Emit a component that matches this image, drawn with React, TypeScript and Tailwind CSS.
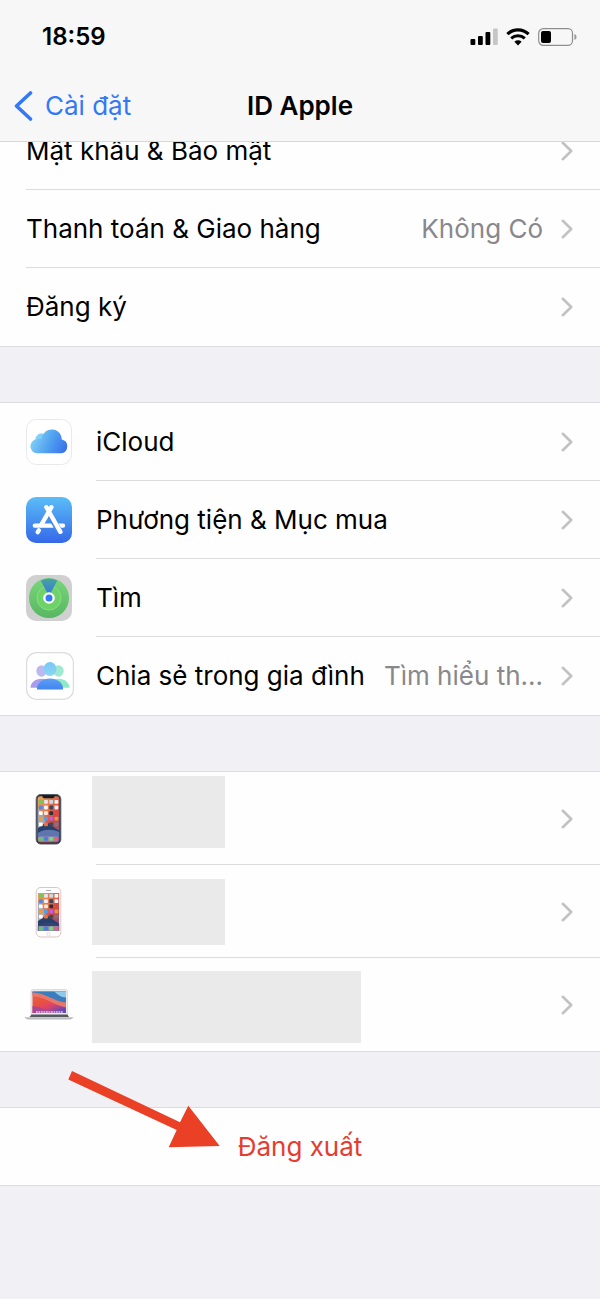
import React from "react";
import clsx from "clsx";

const Chevron = () => (
  <svg width="12" height="20" viewBox="0 0 12 20" fill="none" className="shrink-0" aria-hidden="true">
    <path d="M1.8 1.8 10.2 10l-8.4 8.2" stroke="#c2c2c5" strokeWidth="2.6" strokeLinecap="round" strokeLinejoin="round" />
  </svg>
);

const SignalIcon = () => (
  <svg width="28" height="18" viewBox="0 0 28 18" aria-hidden="true">
    <rect x="0.5" y="11" width="4.8" height="6" rx="1" />
    <rect x="8" y="8" width="4.8" height="9" rx="1" />
    <rect x="15.5" y="4" width="4.8" height="13" rx="1" />
    <rect x="23" y="0.5" width="4.8" height="16.5" rx="1" fill="#c6c6c6" />
  </svg>
);

const WifiIcon = () => (
  <svg width="24" height="18" viewBox="0 0 24 18" fill="none" aria-hidden="true">
    <path d="M1.4 6.2a15.4 15.4 0 0 1 21.2 0" stroke="#000" strokeWidth="3.2" />
    <path d="M5.2 10.3a10 10 0 0 1 13.6 0" stroke="#000" strokeWidth="3" />
    <path d="M12 17.4 8.4 13.8a5.2 5.2 0 0 1 7.2 0Z" fill="#000" />
  </svg>
);

const BatteryIcon = () => (
  <svg width="40" height="18" viewBox="0 0 40 18" fill="none" aria-hidden="true">
    <rect x="0.7" y="0.7" width="33.8" height="16.6" rx="4.6" stroke="#8e8e8e" strokeWidth="1.2" />
    <rect x="3" y="3" width="10" height="12" rx="2" fill="#000" />
    <path d="M36.4 6v6c1.4-.6 2.1-1.7 2.1-3s-.7-2.4-2.1-3Z" fill="#999" />
  </svg>
);

const CloudIcon = () => (
  <svg width="46" height="46" viewBox="0 0 46 46" aria-hidden="true">
    <defs>
      <linearGradient id="cloud" x1="0" y1="0.4" x2="1" y2="0.7">
        <stop offset="0" stopColor="#84d3f7" />
        <stop offset="0.55" stopColor="#4f9ff0" />
        <stop offset="1" stopColor="#3a72ea" />
      </linearGradient>
    </defs>
    <rect x="0.5" y="0.5" width="45" height="45" rx="10" fill="#fff" stroke="#e9e9eb" />
    <path
      d="M11 34.3a7 7 0 0 1-1.6-13.7A6 6 0 0 1 17.4 15 10 10 0 0 1 35.8 20.6a7 7 0 0 1-.2 13.7Z"
      fill="url(#cloud)"
    />
    <path d="M9.4 20.6a6 6 0 0 1 8-5.6c-1.6 1.8-2 3.4-1.600 5.6-2-1-4.300-1-6.400 0Z" fill="#8dd8f6" opacity="0.6" />
  </svg>
);

const AppStoreIcon = () => (
  <svg width="46" height="46" viewBox="0 0 46 46" fill="none" aria-hidden="true">
    <defs>
      <linearGradient id="store" x1="0" y1="0" x2="0" y2="1">
        <stop offset="0" stopColor="#5abdf7" />
        <stop offset="1" stopColor="#3568e8" />
      </linearGradient>
    </defs>
    <rect width="46" height="46" rx="10" fill="url(#store)" />
    <path d="M8.8 28.6h18M33 28.6h4M12.8 33.4l-1.1 1.8" stroke="#fff" strokeWidth="4.4" strokeLinecap="round" />
    <path d="m22.5 15.500 11 19" stroke="#4685ee" strokeWidth="6.4" />
    <path d="M25.4 10.2 15.2 28M20.4 10.2l14 24.600" stroke="#fff" strokeWidth="4.4" strokeLinecap="round" />
  </svg>
);

const FindIcon = () => (
  <svg width="46" height="46" viewBox="0 0 46 46" fill="none" aria-hidden="true">
    <defs>
      <linearGradient id="find" x1="0" y1="0" x2="0" y2="1">
        <stop offset="0" stopColor="#78d77a" />
        <stop offset="1" stopColor="#59b662" />
      </linearGradient>
      <linearGradient id="beam" x1="0" y1="0" x2="0" y2="1">
        <stop offset="0" stopColor="#4aa39d" />
        <stop offset="1" stopColor="#3273e8" />
      </linearGradient>
    </defs>
    <rect width="46" height="46" rx="10" fill="#d0d0d0" />
    <circle cx="23" cy="23" r="20" fill="url(#find)" />
    <circle cx="23" cy="23" r="12" fill="#6dd267" stroke="#8ade80" />
    <path d="M23 21 14.8 5.8c5-3 11.4-3 16.4 0Z" fill="url(#beam)" />
    <circle cx="23" cy="23" r="5.8" fill="#fff" />
    <circle cx="23" cy="23" r="3.5" fill="#3478f6" />
  </svg>
);

const FamilyIcon = () => (
  <svg width="48" height="48" viewBox="0 0 48 48" aria-hidden="true">
    <defs>
      <linearGradient id="head" x1="0" y1="0" x2="0" y2="1">
        <stop offset="0" stopColor="#79c7f6" />
        <stop offset="1" stopColor="#8ad6f3" />
      </linearGradient>
      <linearGradient id="body" x1="0" y1="0" x2="0" y2="1">
        <stop offset="0" stopColor="#5a9ff4" />
        <stop offset="1" stopColor="#4485f0" />
      </linearGradient>
    </defs>
    <rect x="0.6" y="0.6" width="46.8" height="46.8" rx="10" fill="#fff" stroke="#dcdcde" strokeWidth="1.2" />
    <ellipse cx="15.5" cy="19" rx="5.2" ry="5.7" fill="#bcb9f1" />
    <ellipse cx="32.5" cy="19" rx="5.2" ry="5.7" fill="#9ee9cf" />
    <path d="M4.5 35.8c0-5 4.5-9 11-9 4 0 7 1.500 9 4v5Z" fill="#a79dec" />
    <path d="M43.5 35.8c0-5-4.5-9-11-9-4 0-7 1.500-9 4v5Z" fill="#91e8c8" />
    <ellipse cx="24" cy="17" rx="6.4" ry="7" fill="url(#head)" />
    <path d="M11 37.4c-.6-6 5-11 13-11s13.6 5 13 11Z" fill="url(#body)" />
  </svg>
);

const appColors = [
  ["#5ed15f", "#e9e4f0", "#c8d9ec", "#fdf6ef"],
  ["#4b8bed", "#f4f4f4", "#3d4654", "#f3f4fb"],
  ["#fff", "#fbeade", "#28303a", "#e6463a"],
  ["#f59b36", "#4a9ff0", "#c55ae8", "#f19138"],
  ["#fff", "#f0713e", "#43484f", "#8c736b"],
];

type PhoneProps = { classic?: boolean };

const PhoneIcon = ({ classic }: PhoneProps) => {
  const id = classic ? "classicScreen" : "modernScreen";
  const left = classic ? 2.4 : 2;
  const gap = 5.2;

  return (
    <svg width="48" height="52" viewBox="0 0 48 52" aria-hidden="true">
      <defs>
        <linearGradient id={id} x1="0" y1="0" x2="0.9" y2="1">
          <stop offset="0" stopColor="#efa458" />
          <stop offset="0.35" stopColor="#e27c50" />
          <stop offset="0.6" stopColor="#d44b41" />
          <stop offset="1" stopColor="#74548f" />
        </linearGradient>
      </defs>
      <g transform="translate(11.5 1)">
        <rect
          x="0.7"
          y="0.5"
          width="24.6"
          height="49.5"
          rx="4.5"
          fill={classic ? "#fff" : "#23272d"}
          stroke={classic ? "#dfc3c2" : "#555e68"}
          strokeWidth="1"
        />
        <rect
          x={left}
          y={classic ? 6 : 2.2}
          width={classic ? 21.2 : 22}
          height={classic ? 38 : 46.2}
          rx={classic ? 0 : 3}
          fill={`url(#${id})`}
        />
        <path d="M2.4 14c4 4 7 10 8 16l-8 6Z" fill="#a3a9b4" />
        <path d="M2.4 34c3-1 6-5 9-5.5C15 30 19 34 23.6 36.5V44H2.4Z" fill="#27406d" />
        <path d="M2.4 39c6-4 14-4 21.2-1v6H2.4Z" fill={classic ? "#36446f" : "#6075ad"} />
        {!classic && <path d="M7 1.5h12v1c0 1-.8 1.7-1.8 1.7H8.8C7.8 4.2 7 3.5 7 2.5Z" fill="#16191d" />}
        {appColors.map((row, r) =>
          row.map((color, c) => (
            <rect
              key={`${r}-${c}`}
              x={3.4 + c * gap}
              y={(classic ? 7 : 6) + r * (classic ? 5.2 : 5.6)}
              width="3.8"
              height="3.8"
              rx="0.8"
              fill={color}
            />
          ))
        )}
        <rect x={left + 0.6} y={classic ? 39 : 42.5} width="20.2" height="5" rx={classic ? 0 : 1.5} fill="#a996c2" opacity="0.8" />
        {["#56cf62", "#4381df", "#78dc74", "#ee5c78"].map((color, c) => (
          <rect key={color} x={3.4 + c * gap} y={classic ? 39.6 : 43} width="3.8" height="3.8" rx="0.8" fill={color} />
        ))}
        {classic && (
          <>
            <path d="M10.5 3.5h5" stroke="#999" strokeWidth="0.8" />
            <circle cx="13" cy="47" r="1.7" fill="#fff" stroke="#d9c4c2" strokeWidth="0.6" />
          </>
        )}
      </g>
    </svg>
  );
};

const LaptopIcon = () => (
  <svg width="50" height="32" viewBox="0 0 50 32" aria-hidden="true">
    <defs>
      <linearGradient id="laptop" x1="0" y1="0" x2="0.7" y2="1">
        <stop offset="0" stopColor="#e8615a" />
        <stop offset="0.45" stopColor="#e9523c" />
        <stop offset="0.7" stopColor="#df426a" />
        <stop offset="1" stopColor="#6848b2" />
      </linearGradient>
    </defs>
    <rect x="7" y="0.5" width="36.5" height="26" rx="2" fill="#eaebec" stroke="#d0d1d3" strokeWidth="0.7" />
    <rect x="8.5" y="2.5" width="33.5" height="21.5" fill="url(#laptop)" />
    <path d="M8.5 2.5H42v14C32 15 23 6 8.5 5Z" fill="#397dbe" />
    <path d="M8.5 3.5C22 4 29 12 42 13.5v5C29 16 21 7.5 8.5 7.5Z" fill="#e97767" />
    <path d="M30 2.5H42v6c-5 0-8-3-12-6Z" fill="#8fcbe8" />
    <path d="M8.5 17c8 1 13 4 21 7h-21Z" fill="#a84794" />
    <path d="M12 23h27" stroke="#dcc9df" strokeWidth="1.3" strokeDasharray="1.8 0.7" />
    <path d="M7.5 25.5h36l1.5 2.500H5.5Z" fill="#55585c" />
    <path d="M0.5 28.2h49c-1 1.8-2.5 2.3-5 2.3H6c-3 0-4.500-.7-5.500-2.300Z" fill="#b9babd" />
  </svg>
);

const account = [
  { label: "Mật khẩu & Bảo mật" },
  { label: "Thanh toán & Giao hàng", value: "Không Có" },
  { label: "Đăng ký" },
];

const services = [
  { label: "iCloud", icon: <CloudIcon /> },
  { label: "Phương tiện & Mục mua", icon: <AppStoreIcon /> },
  { label: "Tìm", icon: <FindIcon /> },
  { label: "Chia sẻ trong gia đình", icon: <FamilyIcon />, value: "Tìm hiểu th..." },
];

const devices = [
  { name: "iPhone", icon: <PhoneIcon />, mask: "mt-1 h-[72px] w-[133px] self-start" },
  { name: "iPhone", icon: <PhoneIcon classic />, mask: "h-[66px] w-[133px]" },
  { name: "MacBook", icon: <LaptopIcon />, mask: "mb-2 h-[72px] w-[269px] self-end" },
];

const Group = ({ children }: { children: React.ReactNode }) => (
  <ul className="border-y border-[#dcdce0] bg-[#fefefe]">{children}</ul>
);

type RowProps = { label: string; value?: string; icon?: React.ReactNode };

const Row = ({ label, value, icon }: RowProps) => (
  <li className="group">
    <a href="#" className="flex h-[78px] pl-[26px]">
      {icon && <span className="flex w-[70px] shrink-0 items-center">{icon}</span>}
      <span className="flex grow items-center border-b border-[#dcdce0] pr-[27px] whitespace-nowrap group-last:border-b-0">
        <span>{label}</span>
        <span className="ml-auto pl-4 text-[#88888c]">{value}</span>
        <span className="ml-[18px] shrink-0">
          <Chevron />
        </span>
      </span>
    </a>
  </li>
);

const App = () => {
  return (
    <div className="min-h-screen overflow-hidden bg-[#f0f0f5] font-['Inter','Liberation_Sans',sans-serif] text-[26px] leading-8 text-black">
      <header className="relative z-10 border-b border-[#d8d8da] bg-[#f7f7f7]">
        <div className="flex h-[74px] items-center justify-between pr-[22px] pl-[42px]">
          <span className="text-2xl font-semibold">18:59</span>
          <div className="flex items-center gap-2">
            <SignalIcon />
            <WifiIcon />
            <BatteryIcon />
          </div>
        </div>
        <nav className="grid h-[67px] grid-cols-[1fr_auto_1fr] items-center px-3.5 pb-1">
          <a href="#" className="flex items-center gap-3 text-[#3478f6]">
            <svg width="19" height="30" viewBox="0 0 19 30" fill="none" aria-hidden="true">
              <path d="M16.5 2 2.5 15l14 13" stroke="currentColor" strokeWidth="3.6" strokeLinecap="round" strokeLinejoin="round" />
            </svg>
            Cài đặt
          </a>
          <h1 className="font-semibold">ID Apple</h1>
        </nav>
      </header>

      <main className="-mt-[31px] flex flex-col gap-[55px]">
        <Group>
          {account.map((item) => (
            <Row key={item.label} {...item} />
          ))}
        </Group>

        <Group>
          {services.map((item) => (
            <Row key={item.label} {...item} />
          ))}
        </Group>

        <Group>
          {devices.map(({ name, icon, mask }, i) => (
            <li key={i} className="group">
              <a href="#" aria-label={name} className="flex h-[93px] pl-6">
                <span className="flex w-[68px] shrink-0 items-center">{icon}</span>
                <span className="relative flex grow items-center pr-[27px] after:absolute after:right-0 after:bottom-0 after:left-1 after:h-px after:bg-[#dcdce0] group-last:after:hidden">
                  <span className={clsx("bg-[#eaeaea]", mask)} />
                  <span className="ml-auto">
                    <Chevron />
                  </span>
                </span>
              </a>
            </li>
          ))}
        </Group>

        <div className="relative border-y border-[#dcdce0] bg-[#fefefe]">
          <button type="button" className="h-[77px] w-full text-[#e63c30]">
            Đăng xuất
          </button>
          <svg
            width="175"
            height="110"
            viewBox="0 0 175 110"
            className="pointer-events-none absolute -top-[58px] left-[50px]"
            aria-hidden="true"
          >
            <path d="M22 21 130 72.3l8.3-16.6 31.4 40.3-51 1.3 8-17.3L18.3 29.5Z" fill="#ea4025" />
          </svg>
        </div>
      </main>
    </div>
  );
};

export default App;
